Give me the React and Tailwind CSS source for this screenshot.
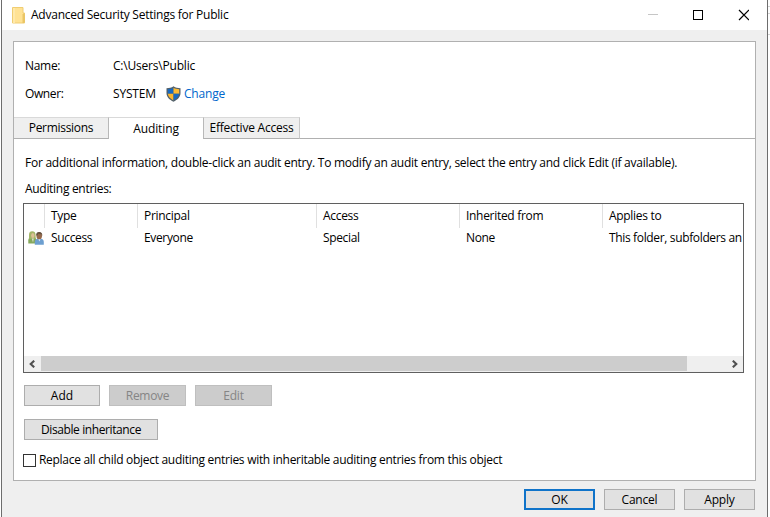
const Folder = () => (
  <svg width="14" height="17" viewBox="0 0 14 17" className="block">
    <path d="M0.5 0.5h10.5v5.5h1.5v10H0.5z" fill="#ffe294" stroke="#f0cd72" />
    <path d="M1 1h2v15H1z" fill="#ffe9aa" />
    <path d="M10.5 7.5l1.5-1.5 1 1.5v7l-1 1.5h-1.5z" fill="#eac565" />
  </svg>
);

const Shield = () => (
  <svg width="15" height="16" viewBox="0 0 15 16" className="block">
    <path d="M7.5 0.3C5.6 1.7 3.2 2.2 0.5 2.2v4.8c0 4 3 6.8 7 8.7 4-1.9 7-4.7 7-8.7V2.2c-2.7 0-5.1-.5-7-1.9z" fill="#53606a" />
    <path d="M7.5 1.8C5.8 2.8 4 3.2 1.8 3.3V7.8h5.7z" fill="#1769c0" />
    <path d="M7.5 1.8c1.7 1 3.5 1.4 5.7 1.5V7.8H7.5z" fill="#fbba33" />
    <path d="M1.8 7.8c.3 3 2.5 5 5.7 6.6V7.8z" fill="#f9b52d" />
    <path d="M13.2 7.8c-.3 3-2.5 5-5.7 6.6V7.8z" fill="#1769c0" />
  </svg>
);

const People = () => (
  <svg width="16" height="14" viewBox="0 0 16 14" className="block">
    <path d="M0.3 12.5V9.5C.3 7.5 1.5 6 4 6s4.5 1 4.5 3v3.5z" fill="#86a95c" />
    <path d="M1 4C1 1.2 2.3.2 4.2.2S7.6 1.2 7.6 4l.1 3.8H1z" fill="#a3b568" />
    <ellipse cx="4.8" cy="4.5" rx="1.7" ry="2.5" fill="#dcc096" />
    <path d="M3.8 7.5h2l-.8 4z" fill="#dce3cf" />
    <path d="M6.8 13.8v-3c0-2 1.7-3.2 4.4-3.2s4.6 1.2 4.6 3.2v3z" fill="#6d9fd0" />
    <ellipse cx="11.2" cy="4.8" rx="2.8" ry="3.6" fill="#94694c" />
    <path d="M8.2 4.4C8 2 9.2.9 11.2.9s3.5 1.2 3 4.2l-.8-1.8-3-.5-1 1.6z" fill="#64503f" />
    <path d="M10.3 8.2h2.2l-1 2.4z" fill="#d9e6f2" />
  </svg>
);

const Chevron = ({ flip }) => (
  <svg width="6" height="8" viewBox="0 0 6 8" className={flip ? "block rotate-180" : "block"}>
    <path d="M5.2 0.7L1.7 4L5.2 7.3" fill="none" stroke="#505050" strokeWidth="2.1" />
  </svg>
);

const Button = ({ children, className = "" }) => (
  <button className={`flex h-[21px] items-center justify-center border ${className}`}>{children}</button>
);
const normal = "border-[#adadad] bg-[#e1e1e1]";
const disabled = "border-[#bfbfbf] bg-[#cccccc] text-[#858585]";

export default function App() {
  return (
    <div className="flex h-[517px] w-[770px] overflow-hidden bg-white pl-px font-['Open_Sans','Noto_Sans',sans-serif] text-[12px] leading-[16px] text-black">
      <div className="flex w-[767px] flex-col border-x border-[#6d6d6d] bg-[#efefef]">
        <header className="flex h-[30px] shrink-0 items-center bg-white pl-[10px] pr-[18px]">
          <Folder />
          <span className="ml-[5px] grow tracking-[-0.24px]">Advanced Security Settings for Public</span>
          <svg width="102" height="12" viewBox="0 0 102 12" className="block" shapeRendering="crispEdges">
            <path d="M1 5.5h10" stroke="#c6c6c6" />
            <path d="M46.5 1.5h9v9h-9z" fill="none" stroke="#000" />
            <path d="M92 1l10 10M102 1l-10 10" stroke="#000" strokeWidth="1.2" shapeRendering="auto" />
          </svg>
        </header>

        <main className="ml-[11px] mt-[11px] flex h-[440px] w-[743px] shrink-0 flex-col border border-[#b0b0b0] bg-white">
          <div className="grid h-[75px] shrink-0 grid-cols-[88px_1fr] grid-rows-[28px_28px] pl-[11px] pt-[10px]">
            <span className="self-center tracking-[-0.3px]">Name:</span>
            <span className="self-center tracking-[-0.2px]">C:\Users\Public</span>
            <span className="self-center tracking-[-0.4px]">Owner:</span>
            <span className="flex items-center">
              <span className="w-[53px] tracking-[-0.2px]">SYSTEM</span>
              <Shield />
              <span className="ml-[3px] tracking-[-0.2px] text-[#0066cc]">Change</span>
            </span>
          </div>

          <nav className="flex h-[22px] shrink-0">
            <div className="flex w-[95px] items-center justify-center border-y border-r border-b-[#b0b0b0] border-r-[#b8b8b8] border-t-[#d9d9d9] bg-[#efefef] tracking-[-0.3px]">Permissions</div>
            <div className="flex w-[94px] items-center justify-center border-t border-[#d9d9d9] tracking-[-0.1px]">Auditing</div>
            <div className="flex w-[97px] items-center justify-center whitespace-nowrap border border-b-[#b0b0b0] border-l-[#b8b8b8] border-r-[#c8c8c8] border-t-[#d9d9d9] bg-[#efefef] tracking-[-0.22px]">Effective Access</div>
            <div className="grow border-b border-[#b0b0b0]" />
          </nav>

          <section className="flex grow flex-col pl-[9px]">
            <p className="mt-[16px] whitespace-nowrap pl-[2px] tracking-[-0.255px]">For additional information, double-click an audit entry. To modify an audit entry, select the entry and click Edit (if available).</p>
            <p className="mt-[10px] pl-[2px] tracking-[-0.3px]">Auditing entries:</p>

            <div className="mt-[6px] flex h-[170px] w-[721px] shrink-0 flex-col overflow-hidden border border-[#5f5f5f]">
              <div className="grid h-[24px] shrink-0 grid-cols-[21px_93px_179px_143px_143px_140px] whitespace-nowrap leading-[24px] tracking-[-0.3px]">
                <span className="border-r border-[#e0e0e0]" />
                <span className="border-r border-[#e0e0e0] pl-[6px]">Type</span>
                <span className="border-r border-[#e0e0e0] pl-[6px]">Principal</span>
                <span className="border-r border-[#e0e0e0] pl-[6px]">Access</span>
                <span className="border-r border-[#e0e0e0] pl-[6px]">Inherited from</span>
                <span className="pl-[6px]">Applies to</span>
              </div>
              <div className="grid h-[20px] grid-cols-[21px_93px_179px_143px_143px_140px] items-center whitespace-nowrap tracking-[-0.35px]">
                <span className="pl-[4px]"><People /></span>
                <span className="pl-[6px]">Success</span>
                <span className="pl-[6px]">Everyone</span>
                <span className="pl-[6px]">Special</span>
                <span className="pl-[6px]">None</span>
                <span className="pl-[6px]">This folder, subfolders an</span>
              </div>
              <div className="mt-auto flex h-[16px] items-center bg-[#efefef] pb-px">
                <span className="flex w-[17px] pl-[5px]"><Chevron /></span>
                <span className="h-[15px] w-[646px] bg-[#cdcdcd]" />
                <span className="ml-auto mr-[5px]"><Chevron flip /></span>
              </div>
            </div>

            <div className="ml-px mt-[12px] flex">
              <Button className={`w-[76px] ${normal}`}>Add</Button>
              <Button className={`ml-[9px] w-[77px] tracking-[-0.3px] ${disabled}`}>Remove</Button>
              <Button className={`ml-[9px] w-[77px] tracking-[-0.2px] ${disabled}`}>Edit</Button>
            </div>
            <Button className={`ml-px mt-[13px] w-[134px] tracking-[-0.4px] ${normal}`}>Disable inheritance</Button>
            <label className="mt-[12px] flex items-center whitespace-nowrap">
              <span className="mr-[3px] h-[13px] w-[13px] border border-[#333] bg-white" />
              <span className="tracking-[-0.29px]">Replace all child object auditing entries with inheritable auditing entries from this object</span>
            </label>
          </section>
        </main>

        <footer className="mt-[8px] flex justify-end gap-[9px] pr-[12px]">
          <Button className="w-[71px] border-2 border-[#0f73c9] bg-[#e1e1e1]">OK</Button>
          <Button className={`w-[71px] tracking-[-0.2px] ${normal}`}>Cancel</Button>
          <Button className={`w-[71px] tracking-[-0.2px] ${normal}`}>Apply</Button>
        </footer>
      </div>
      <div className="flex w-[2px] flex-col">
        <span className="mt-[6px] h-px bg-[#d4d4d4]" />
        <span className="mt-[6px] h-px bg-[#d4d4d4]" />
        <span className="mt-[20px] h-px bg-[#d4d4d4]" />
      </div>
    </div>
  );
}
